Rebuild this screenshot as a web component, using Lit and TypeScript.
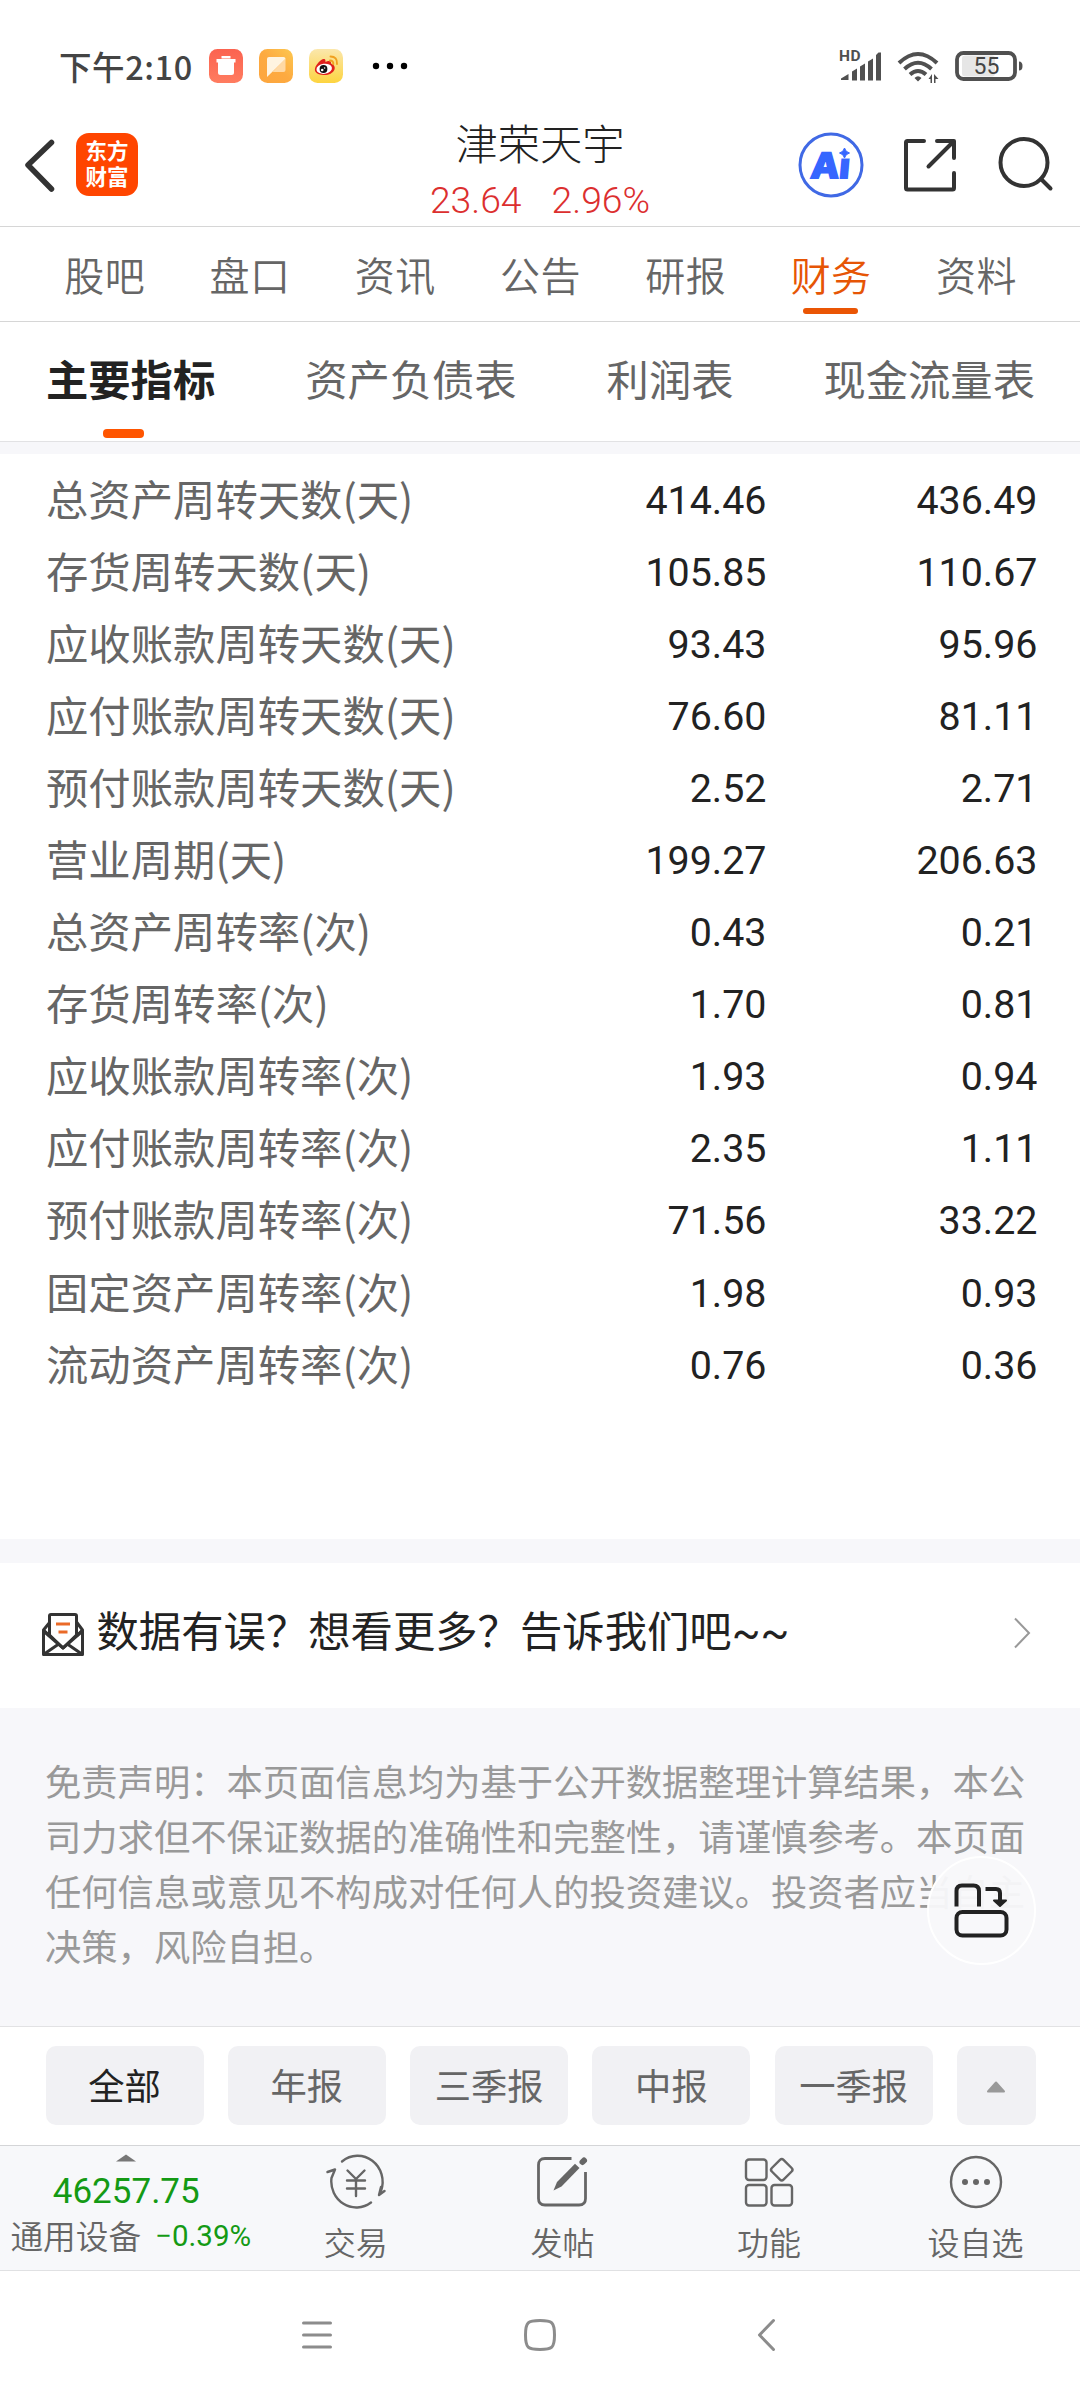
import { LitElement, html, css, svg } from "lit";
import { customElement } from "lit/decorators.js";
import { classMap } from "lit/directives/class-map.js";

const SECTIONS = ["股吧", "盘口", "资讯", "公告", "研报", "财务", "资料"];
const REPORTS = ["主要指标", "资产负债表", "利润表", "现金流量表"];
const PERIODS = ["全部", "年报", "三季报", "中报", "一季报"];
const ROWS: [string, string, string][] = [
  ["总资产周转天数(天)", "414.46", "436.49"],
  ["存货周转天数(天)", "105.85", "110.67"],
  ["应收账款周转天数(天)", "93.43", "95.96"],
  ["应付账款周转天数(天)", "76.60", "81.11"],
  ["预付账款周转天数(天)", "2.52", "2.71"],
  ["营业周期(天)", "199.27", "206.63"],
  ["总资产周转率(次)", "0.43", "0.21"],
  ["存货周转率(次)", "1.70", "0.81"],
  ["应收账款周转率(次)", "1.93", "0.94"],
  ["应付账款周转率(次)", "2.35", "1.11"],
  ["预付账款周转率(次)", "71.56", "33.22"],
  ["固定资产周转率(次)", "1.98", "0.93"],
  ["流动资产周转率(次)", "0.76", "0.36"],
];

const tradeIcon = svg`
  <path d="M16 7.5A25 26 0 0 1 55 37" />
  <path d="M1.500 18L9 15.500L5.500 24A25 26 0 0 0 45 48.500" />
  <path d="M58.500 37L53 41L55 33" />
  <path d="M21.500 16.500L30 25L38.500 16.500M30 25V42M21 26.500H39M21 34.500H39" />`;
const postIcon = svg`
  <path stroke-width="2.800" stroke-linecap="butt" d="M39.500 4.500H13Q6.500 4.500 6.500 11V44.500Q6.500 51 13 51H47Q53.500 51 53.500 44.500V18" />
  <path fill="#666" stroke="none" d="M21.500 36.500L25 28L43 9.800L47.500 14L29.500 32.500Z" />
  <path stroke-width="6" d="M50.500 8L52 6.500" />`;
const gridIcon = svg`
  <rect x="7" y="5.500" width="20.500" height="20.500" rx="3" />
  <rect x="7" y="31" width="20.500" height="20.500" rx="3" />
  <rect x="32.500" y="31" width="20.500" height="20.500" rx="3" />
  <rect x="34.500" y="7.500" width="16.500" height="16.500" rx="2.500" transform="rotate(45 42.750 15.750)" />`;
const moreIcon = svg`
  <circle cx="30" cy="28" r="25" />
  <g fill="#666" stroke="none"><circle cx="19" cy="28" r="3" /><circle cx="30" cy="28" r="3" /><circle cx="41" cy="28" r="3" /></g>`;

const ACTIONS = [
  { label: "交易", icon: tradeIcon },
  { label: "发帖", icon: postIcon },
  { label: "功能", icon: gridIcon },
  { label: "设自选", icon: moreIcon },
];

@customElement("status-bar")
class StatusBar extends LitElement {
  static styles = css`
    :host {
      display: flex;
      align-items: center;
      height: 132px;
      box-sizing: border-box;
      padding: 0 55px 0 59px;
      color: #444;
      font-family: "Noto Sans CJK SC", sans-serif;
    }
    svg { display: block; flex: none; }
    .time { font-size: 32.500px; line-height: 48px; font-weight: 500; letter-spacing: .6px; width: 150px; white-space: nowrap; padding-bottom: 1px; }
    .apps { display: flex; gap: 16px; }
    .dots { margin-left: 29px; }
    .right { display: flex; align-items: flex-end; margin-left: auto; }
    .wifi { margin-left: 14px; }
    .battery { margin-left: 14px; }
    .right { padding-bottom: 0; }
    .signal { margin-top: -8px; }
  `;
  render() {
    return html`
      <div class="time">下午2:10</div>
      <div class="apps">
        <svg width="34" height="34" viewBox="0 0 34 34">
          <defs><linearGradient id="r" x1="0" y1="0" x2="0" y2="1"><stop offset="0" stop-color="#fb6350" /><stop offset="1" stop-color="#ff7c60" /></linearGradient></defs>
          <rect width="34" height="34" rx="8.500" fill="url(#r)" />
          <path fill="#fff" d="M12.500 7H21.500V9.500H12.500ZM7.500 10H26.500V13.500H25V23.500Q25 26 22.500 26H11.500Q9 26 9 23.500V13.500H7.500Z" />
        </svg>
        <svg width="34" height="34" viewBox="0 0 34 34">
          <defs>
            <linearGradient id="o" x1="1" y1="0" x2="0" y2="1"><stop offset="0" stop-color="#fdc850" /><stop offset=".5" stop-color="#fdaa40" /><stop offset="1" stop-color="#fda63e" /></linearGradient>
          </defs>
          <rect width="34" height="34" rx="8.500" fill="url(#o)" />
          <path fill="#fff4e0" d="M10 8H24.500Q26.500 8 26.500 10L8 28V10Q8 8 10 8Z" />
          <path fill="#ffd9a4" d="M26.500 9.500V21Q26.500 23 24.500 23H13.500Z" />
        </svg>
        <svg width="34" height="34" viewBox="0 0 34 34">
          <defs><linearGradient id="y" x1="0" y1="0" x2="0" y2="1"><stop offset="0" stop-color="#fbe7ac" /><stop offset="1" stop-color="#fdd440" /></linearGradient></defs>
          <rect width="34" height="34" rx="8.500" fill="url(#y)" />
          <path fill="#e0201b" d="M6 19.500C7 15 12 10.500 14.500 10C16.500 9.500 16.500 11 16.500 13C19 11.500 22.500 11.500 22 14.500C24.500 15.500 26.500 17.500 25.500 20.500C24 24.500 18.500 26.500 14.500 26C9.500 25.800 5 23.500 6 19.500Z" />
          <ellipse cx="15.200" cy="19.800" rx="7.800" ry="5" fill="#fff" transform="rotate(-8 15.200 19.800)" />
          <circle cx="14.500" cy="20" r="3.900" fill="#111" /><circle cx="13.200" cy="21" r="1.300" fill="#fff" /><circle cx="15.600" cy="19" r=".8" fill="#fff" />
          <path d="M21 11.500Q24.500 11.500 24.300 15M21.500 7.500Q28.500 7.500 28 15" fill="none" stroke="#f0a020" stroke-width="1.900" stroke-linecap="round" />
        </svg>
      </div>
      <svg class="dots" width="36" height="8" viewBox="0 0 36 8"><circle cx="4" cy="4" r="3.200" /><circle cx="18" cy="4" r="3.200" /><circle cx="32" cy="4" r="3.200" /></svg>
      <div class="right">
        <svg class="signal" width="46" height="42" viewBox="-2 -8 46 42" fill="#505050">
          <text x="0" y="12" font-family="Roboto, sans-serif" font-weight="700" font-size="15.500" letter-spacing="0.500">HD</text>
          <path d="M2 31V29.500L9.500 25V31ZM13 22.500L18 19.500V31.500H13ZM21 17.500L26 14.500V31.500H21ZM29 12.500L34 9.500V31.500H29ZM37 6L39.500 3.500H42V31.500H37Z" />
        </svg>
        <svg class="wifi" width="44" height="34" viewBox="0 0 44 34" fill="none" stroke="#505050" stroke-width="4">
          <path d="M2 14Q21 -4 40 14M7.500 20Q21 7.500 34.500 20M13 25.500Q21 18.500 29 25.500" />
          <path fill="#505050" stroke="none" d="M17.500 29Q21 25.500 24.500 29L21 32.500ZM31.500 30L35 25V34H33.500V30ZM37 25L41.500 30H38.500V34H37Z" />
        </svg>
        <svg class="battery" width="70" height="34" viewBox="0 0 70 34">
          <rect x="7" y="6.500" width="33" height="21" rx="3" fill="#e6e6e6" />
          <rect x="2" y="4" width="58" height="26" rx="6.500" fill="none" stroke="#505050" stroke-width="3.800" />
          <path d="M64 12.500Q67.500 12.500 67.500 17T64 21.500Z" fill="#505050" />
          <text x="31.500" y="25" text-anchor="middle" font-family="Roboto, sans-serif" font-size="23" fill="#444">55</text>
        </svg>
      </div>
    `;
  }
}

@customElement("stock-header")
class StockHeader extends LitElement {
  static styles = css`
    :host {
      display: grid;
      grid-template-columns: 1fr 240px 1fr;
      height: 95px;
      box-sizing: border-box;
      border-bottom: 1px solid #d6d6d6;
    }
    svg { display: block; flex: none; }
    .left { display: flex; padding: 1px 0 0 22px; }
    .back { margin-top: 5px; }
    .logo {
      margin-left: 18px;
      width: 62px;
      height: 63px;
      border-radius: 13px;
      background: #ff4500;
      color: #fff;
      font: 700 21.500px/26px "Noto Sans CJK SC", sans-serif;
      text-align: center;
      box-sizing: border-box;
      padding-top: 4px;
    }
    .mid { text-align: center; }
    .name { font: 300 42.300px/46px "Noto Sans CJK SC", sans-serif; color: #222; margin-top: -13px; white-space: nowrap; height: 53px; }
    .quote { display: flex; justify-content: center; gap: 30px; font: 300 37.300px/44px Roboto, sans-serif; color: #dc2f2f; margin-top: 6px; }
    .right { display: flex; padding: 0 24px 0 0; justify-content: flex-end; }
    .share { margin-left: 39px; }
    .search { margin-left: 39px; }
  `;
  render() {
    return html`
      <div class="left">
        <svg class="back" width="36" height="54" viewBox="0 0 36 54"><path d="M29.500 4.500L6 27L29.500 51" fill="none" stroke="#333" stroke-width="5.500" stroke-linecap="round" stroke-linejoin="round" /></svg>
        <div class="logo">东方<br />财富</div>
      </div>
      <div class="mid">
        <div class="name">津荣天宇</div>
        <div class="quote"><span>23.64</span><span>2.96%</span></div>
      </div>
      <div class="right">
        <svg width="66" height="66" viewBox="0 0 66 66">
          <circle cx="33" cy="33" r="31" fill="none" stroke="#4069e5" stroke-width="3" />
          <g transform="translate(4 0) skewX(-5)"><text x="12" y="46" font-family="Inter, sans-serif" font-weight="800" font-size="35" fill="#3666ff" stroke="#3666ff" stroke-width="1.800" textLength="39" lengthAdjust="spacingAndGlyphs">Ai</text></g>
          <rect x="40" y="13" width="15" height="13.500" fill="#fff" />
          <path d="M46.500 16Q47.500 20 51.500 21Q47.500 22 46.500 26Q45.500 22 41.500 21Q45.500 20 46.500 16Z" fill="#3666ff" stroke="#3666ff" stroke-width="1" />
        </svg>
        <svg class="share" width="56" height="66" viewBox="0 0 56 66" fill="none" stroke="#333" stroke-width="4" stroke-linecap="round" stroke-linejoin="round">
          <path d="M21 9H4.500Q3 9 3 10.500V56Q3 57.500 4.500 57.500H49.500Q51 57.500 51 56V41M34 9H51V26M50 10L25.500 34.500" />
        </svg>
        <svg class="search" width="58" height="66" viewBox="0 0 58 66" fill="none" stroke="#333" stroke-width="4" stroke-linecap="round">
          <circle cx="26" cy="30.500" r="23.500" /><path d="M43 47L52.500 56.500" />
        </svg>
      </div>
    `;
  }
}

@customElement("app-root")
class AppRoot extends LitElement {
  static styles = css`
    :host {
      display: flex;
      flex-direction: column;
      width: 1080px;
      height: 2400px;
      background: #fff;
      color: #666;
      overflow: hidden;
      font-family: "Noto Sans CJK SC", sans-serif;
      white-space: nowrap;
    }
    svg { display: block; flex: none; }
    .sections {
      display: grid;
      grid-template-columns: repeat(7, 145.300px);
      height: 95px;
      flex: none;
      box-sizing: border-box;
      padding-left: 32px;
      border-bottom: 1px solid #d6d6d6;
    }
    .section { display: flex; flex-direction: column; align-items: center; font-size: 40px; font-weight: 350; line-height: 60px; padding-top: 17px; letter-spacing: .5px; }
    .section.on { color: #e65505; }
    .section.on::after { content: ""; width: 55px; height: 6px; border-radius: 3px; background: #ea5504; margin: 4px 1px 0 0; }
    .reports {
      display: flex;
      justify-content: space-between;
      height: 120px;
      flex: none;
      box-sizing: border-box;
      padding: 26px 45px 0 46px;
      border-bottom: 1px solid #e2e2e4;
      font-size: 42.300px;
      line-height: 60px;
    }
    .report { display: flex; flex-direction: column; }
    .report.on { color: #222; font-weight: 700; }
    .report.on::after { content: ""; width: 41px; height: 9px; border-radius: 4px; background: #ff5500; margin: 21px 0 0 57px; }
    .band { height: 12px; background: #f7f7fa; flex: none; }
    .table { padding: 10px 42.500px 0 46px; height: 1085px; box-sizing: border-box; flex: none; }
    .row { display: grid; grid-template-columns: 1fr 270px 271px; height: 72.050px; align-items: center; }
    .label { font-size: 42.350px; line-height: 66px; padding-bottom: 4px; }
    .num { font: 400 39.400px/66px Roboto, sans-serif; color: #222; text-align: right; padding-top: 2px; }
    .feedback {
      display: flex;
      align-items: center;
      height: 169px;
      flex: none;
      box-sizing: border-box;
      border-top: 24px solid #f7f7fa;
      padding: 0 48px 0 40px;
      color: #222;
      font-size: 42.350px;
    }
    .feedback .msg { margin: 0 auto 9px 8.500px; line-height: 60px; }
    .feedback .tail { font-family: Roboto, sans-serif; }
    .feedback .chev { margin-bottom: 5px; }
    .feedback .mail { margin-bottom: 1px; }
    .disclaimer {
      background: #f7f7fa;
      height: 318px;
      flex: none;
      box-sizing: border-box;
      padding: 45px 45px 0;
      font-size: 36.300px;
      line-height: 55px;
      color: #999;
      position: relative;
    }
    .rotate {
      position: absolute;
      left: 927px;
      top: 148px;
      width: 109px;
      height: 109px;
      box-sizing: border-box;
      border: 2px solid #fff;
      border-radius: 50%;
      background: rgba(248, 248, 250, .95);
      display: grid;
      place-items: center;
      padding: 0 2px 2px 0;
    }
    .periods {
      display: flex;
      gap: 24.300px;
      height: 120px;
      flex: none;
      box-sizing: border-box;
      border-top: 1px solid #e2e2e4;
      border-bottom: 1px solid #d4d5d7;
      padding: 19px 44px 0 45.500px;
    }
    .period { flex: 2 1 0; height: 79px; border-radius: 10px; background: #f1f1f4; font-size: 36.300px; line-height: 76px; text-align: center; }
    .period.on { color: #222; }
    .more { width: 79px; height: 79px; border-radius: 10px; background: #f1f1f4; display: grid; place-items: center; }
    .actions {
      display: grid;
      grid-template-columns: 252.500px repeat(4, 206.600px);
      height: 125px;
      flex: none;
      box-sizing: border-box;
      background: #f7f8fa;
      border-bottom: 1px solid #e0e1e3;
    }
    .index { display: flex; flex-direction: column; align-items: center; padding-top: 8px; }
    .price { font: 400 35px/40px Roboto, sans-serif; color: #149a14; margin-top: 10px; }
    .sector { display: flex; font-size: 32.700px; line-height: 40px; font-weight: 350; gap: 14px; margin-top: 3px; padding-left: 9px; }
    .change { font: 400 29.500px/42px Roboto, sans-serif; color: #149a14; }
    .action { display: flex; flex-direction: column; align-items: center; padding-top: 8px; font-size: 32px; line-height: 44px; font-weight: 350; }
    .action svg { margin-bottom: 9px; }
    .sysnav { display: flex; align-items: center; flex: 1; padding: 0 0 2px 300px; }
    .sysnav .home { margin: 0 200px 0 189px; }
  `;

  render() {
    return html`
      <status-bar></status-bar>
      <stock-header></stock-header>
      <nav class="sections">
        ${SECTIONS.map((s) => html`<div class=${classMap({ section: true, on: s === "财务" })}>${s}</div>`)}
      </nav>
      <nav class="reports">
        ${REPORTS.map((r, i) => html`<div class=${classMap({ report: true, on: i === 0 })}>${r}</div>`)}
      </nav>
      <div class="band"></div>
      <section class="table">
        ${ROWS.map(([label, a, b]) => html`<div class="row"><div class="label">${label}</div><div class="num">${a}</div><div class="num">${b}</div></div>`)}
      </section>
      <section class="feedback">
        <svg class="mail" width="48" height="46" viewBox="0 0 48 46" fill="none" stroke="#333" stroke-width="3" stroke-linejoin="round">
          <path d="M10 10L3.500 18V42.500H42.500V18L36.500 10M3.500 18L10 24M42.500 18L36.500 24M3.500 42.500L18 32.500M42.500 42.500L28 32.500" />
          <path d="M9.500 23V4Q9.500 2.500 11 2.500H35Q36.500 2.500 36.500 4V23L23 36Z" fill="#fff" />
          <path d="M3.500 19L23 36L42.500 19" />
          <path d="M16 12H30M18.500 20H27.500" stroke="#ea6a28" stroke-width="3.200" />
        </svg>
        <span class="msg">数据有误？想看更多？告诉我们吧<span class="tail">~~</span></span>
        <svg class="chev" width="20" height="34" viewBox="0 0 20 34"><path d="M3 2.500L17 17L3 31.500" fill="none" stroke="#999" stroke-width="2" /></svg>
      </section>
      <section class="disclaimer">
        免责声明：本页面信息均为基于公开数据整理计算结果，本公<br />司力求但不保证数据的准确性和完整性，请谨慎参考。本页面<br />任何信息或意见不构成对任何人的投资建议。投资者应当自主<br />决策，风险自担。
        <div class="rotate">
          <svg width="56" height="56" viewBox="0 0 56 56" fill="none" stroke="#222" stroke-width="4" stroke-linejoin="round">
            <path d="M3.500 24.500V9Q3.500 3.500 9 3.500H20.500Q26 3.500 26 9V24.500M32.500 7H43Q47 7 47 11V18" />
            <rect x="3.500" y="30" width="50" height="23.500" rx="6" />
            <path d="M41 18.500H53L47 24Z" fill="#222" stroke-width="2" />
          </svg>
        </div>
      </section>
      <nav class="periods">
        ${PERIODS.map((p, i) => html`<div class=${classMap({ period: true, on: i === 0 })}>${p}</div>`)}
        <div class="more"><svg width="20" height="14" viewBox="0 0 20 14"><path d="M2 12.500H18L10 3.500Z" fill="#999" stroke="#999" stroke-width="2" stroke-linejoin="round" /></svg></div>
      </nav>
      <nav class="actions">
        <div class="index">
          <svg width="20" height="8" viewBox="0 0 20 8"><path d="M0 7.500L10 .5L20 7.500Z" fill="#777" /></svg>
          <div class="price">46257.75</div>
          <div class="sector"><span>通用设备</span><span class="change">−0.39%</span></div>
        </div>
        ${ACTIONS.map(
          (a) => html`<div class="action">
            <svg width="60" height="56" viewBox="0 0 60 56" fill="none" stroke="#666" stroke-width="2.400" stroke-linecap="round" stroke-linejoin="round">${a.icon}</svg>
            ${a.label}
          </div>`
        )}
      </nav>
      <footer class="sysnav">
        <svg width="34" height="34" viewBox="0 0 34 34" stroke="#8c8c8c" stroke-width="3" stroke-linecap="round"><path d="M3.500 5H30.500M3.500 17H30.500M3.500 29H30.500" /></svg>
        <svg class="home" width="34" height="34" viewBox="0 0 34 34" fill="none" stroke="#8c8c8c" stroke-width="3"><path d="M17 2.500C29 2.500 31.500 4 31.500 17S29 31.500 17 31.500S2.500 30 2.500 17S5 2.500 17 2.500Z" /></svg>
        <svg width="20" height="34" viewBox="0 0 20 34" fill="none" stroke="#8c8c8c" stroke-width="3" stroke-linecap="round" stroke-linejoin="round"><path d="M16.500 2.500L2.500 17L16.500 31.500" /></svg>
      </footer>
    `;
  }
}
